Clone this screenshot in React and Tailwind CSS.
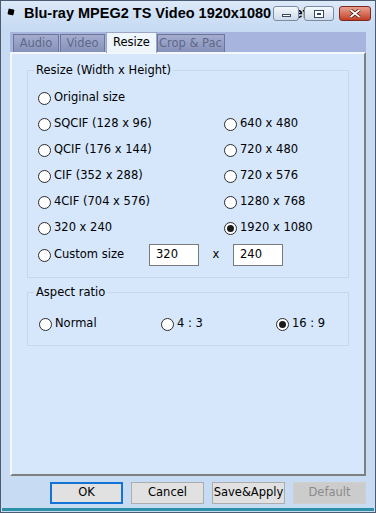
import React from "react";

const font = { fontFamily: '"DejaVu Sans", Verdana, sans-serif' };

const Radio = ({ label, checked }) => (
  <div className="flex items-center gap-[3px] h-[20px] whitespace-nowrap">
    <span className="w-[13px] h-[13px] rounded-full border border-[#2b2b2b] bg-white flex items-center justify-center shrink-0">
      {checked && <span className="w-[7px] h-[7px] rounded-full bg-[#1a1a1a]" />}
    </span>
    <span className="text-[11.5px] text-black leading-none">{label}</span>
  </div>
);

const Group = ({ title, className, children }) => (
  <div className={"relative border border-[#c9d6e6] " + className}>
    <span className="absolute -top-[8px] left-[6px] px-[2px] bg-[#d6e7fc] text-[11.5px] leading-[14px] text-black">
      {title}
    </span>
    {children}
  </div>
);

const Btn = ({ children, primary, disabled }) => (
  <button
    className={
      "w-[73px] h-[22px] text-[11.5px] leading-none flex items-center justify-center " +
      (primary
        ? "border-2 border-[#1673d6] bg-[#e1e1e1] text-black"
        : disabled
        ? "border border-[#cfcfcf] bg-[#cccccc] text-[#8a8a8a]"
        : "border border-[#adadad] bg-[#e1e1e1] text-black")
    }
  >
    {children}
  </button>
);

const tabOff =
  "h-[18px] mr-[1px] border border-[#6b7799] border-b-0 bg-gradient-to-b from-[#a4add0] to-[#8792ba] text-[11.5px] text-[#5f6888] flex items-center justify-center";

export default function App() {
  const left = ["SQCIF (128 x 96)", "QCIF (176 x 144)", "CIF (352 x 288)", "4CIF (704 x 576)", "320 x 240"];
  const right = ["640 x 480", "720 x 480", "720 x 576", "1280 x 768", "1920 x 1080"];
  return (
    <div style={font} className="w-[376px] h-[513px] bg-[#c7dbf3] border border-[#4a5b72] flex flex-col relative overflow-hidden">
      {/* title bar */}
      <div className="h-[26px] flex items-center pl-[7px] bg-gradient-to-b from-[#dce9f8] to-[#c7dbf3]">
        <span className="w-[6px] h-[6px] bg-black rounded-[1px] mr-[10px] -mt-[5px] rotate-12" />
        <span
          style={{ fontFamily: '"Liberation Sans", Arial, sans-serif' }}
          className="text-[14.5px] font-bold text-black whitespace-nowrap"
        >
          Blu-ray MPEG2 TS Video 1920x1080 - Default
        </span>
      </div>
      <div className="absolute top-[5px] right-[4px] flex gap-[5px] items-center">
        <div className="w-[26px] h-[15px] rounded-[3px] border border-[#7a8ba3] bg-gradient-to-b from-[#f4f8fc] to-[#cfdbe9] flex items-end justify-center pb-[3px]">
          <span className="w-[9px] h-[3px] border border-[#384a62] bg-white" />
        </div>
        <div className="w-[30px] h-[15px] rounded-[3px] border border-[#7a8ba3] bg-gradient-to-b from-[#f4f8fc] to-[#cfdbe9] flex items-center justify-center">
          <span className="w-[10px] h-[8px] border border-[#384a62] bg-white flex items-center justify-center">
            <span className="w-[4px] h-[2px] bg-[#384a62]" />
          </span>
        </div>
        <div className="w-[32px] h-[15px] rounded-[3px] border border-[#7a2a1e] bg-gradient-to-b from-[#e8a08e] to-[#c23c22] flex items-center justify-center">
          <svg width="12" height="9" viewBox="0 0 12 9">
            <path d="M1.5 1 L10.5 8 M10.5 1 L1.5 8" stroke="#3c1008" strokeWidth="3.2" />
            <path d="M1.5 1 L10.5 8 M10.5 1 L1.5 8" stroke="#fff" strokeWidth="1.8" />
          </svg>
        </div>
      </div>

      <div className="flex-1 px-[9px] pt-[5px] flex flex-col">
        {/* tabs */}
        <div className="h-[20px] bg-[#a7b5de] flex items-end pl-[3px]">
          <div className={tabOff + " w-[46px]"}>Audio</div>
          <div className={tabOff + " w-[45px]"}>Video</div>
          <div className="h-[21px] w-[51px] border border-[#9aa6c3] border-b-0 bg-[#eef5fb] text-[11.5px] text-black flex items-center justify-center -mb-[1px] relative z-10">
            Resize
          </div>
          <div className="h-[18px] w-[68px] pl-[1px] border border-[#6b7799] border-b-0 bg-gradient-to-b from-[#a4add0] to-[#8792ba] text-[11.5px] text-[#5f6888] flex items-center overflow-hidden whitespace-nowrap">
            Crop &amp; Pac
          </div>
        </div>

        {/* panel */}
        <div className="h-[424px] bg-[#d6e7fc] border-l-2 border-t-2 border-[#f4f8fd] border-r-2 border-b-2 border-r-[#7f7f7f] border-b-[#7f7f7f] px-[15px] pt-[16px]">
          <Group title="Resize (Width x Height)" className="h-[208px] pl-[10px] pt-[17px]">
            <Radio label="Original size" />
            <div className="flex mt-[6px]">
              <div className="w-[186px] shrink-0 flex flex-col gap-[6px]">
                {left.map((l) => (
                  <Radio key={l} label={l} />
                ))}
                <div className="flex items-center">
                  <div className="w-[111px] shrink-0">
                    <Radio label="Custom size" />
                  </div>
                  <div className="w-[50px] h-[22px] border border-[#7a7a7a] bg-white text-[11.5px] flex items-center pl-[6px] shrink-0">320</div>
                  <span className="w-[34px] text-center text-[11.5px] shrink-0">x</span>
                  <div className="w-[50px] h-[22px] border border-[#7a7a7a] bg-white text-[11.5px] flex items-center pl-[6px] shrink-0">240</div>
                </div>
              </div>
              <div className="flex flex-col gap-[6px]">
                {right.map((r) => (
                  <Radio key={r} label={r} checked={r === "1920 x 1080"} />
                ))}
              </div>
            </div>
          </Group>
          <Group title="Aspect ratio" className="h-[54px] mt-[14px] pl-[11px] pt-[21px]">
            <div className="flex">
              <div className="w-[122px]"><Radio label="Normal" /></div>
              <div className="w-[115px]"><Radio label="4 : 3" /></div>
              <Radio label="16 : 9" checked />
            </div>
          </Group>
        </div>

        {/* buttons */}
        <div className="flex justify-end gap-[8px] mt-[6px]">
          <Btn primary>OK</Btn>
          <Btn>Cancel</Btn>
          <Btn>Save&amp;Apply</Btn>
          <Btn disabled>Default</Btn>
        </div>
      </div>
      <div className="h-[3px] bg-[#2e8fa8] mx-[1px] mb-[1px]" />
    </div>
  );
}
